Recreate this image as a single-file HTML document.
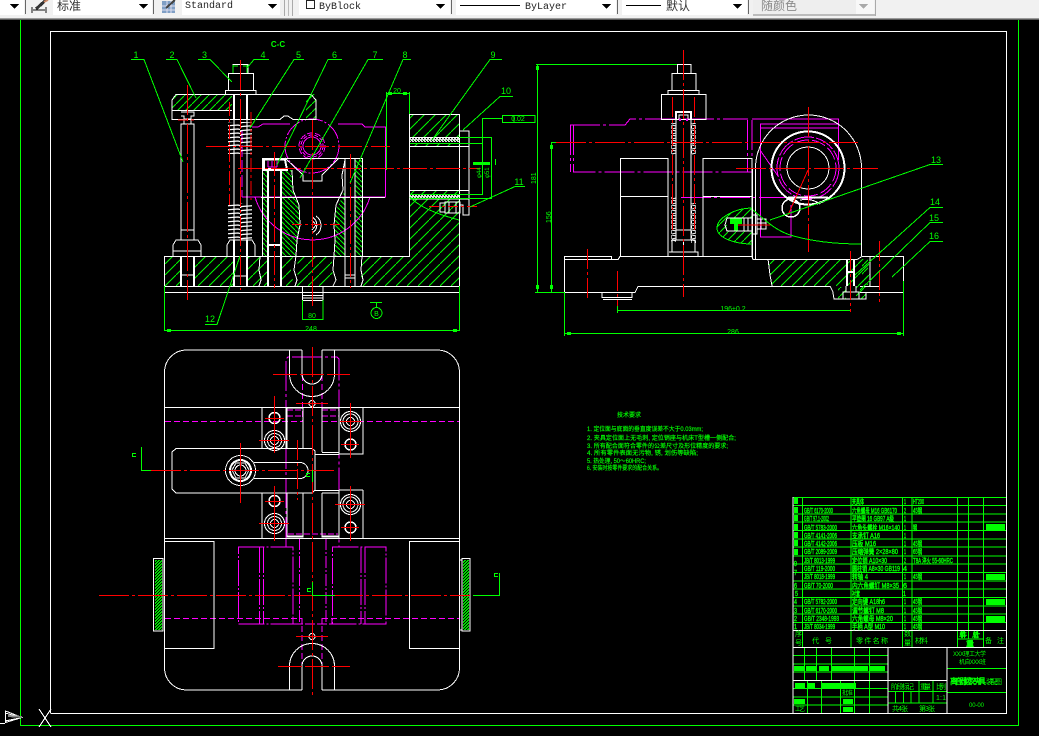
<!DOCTYPE html>
<html><head><meta charset="utf-8"><style>
html,body{margin:0;padding:0;background:#000;width:1039px;height:736px;overflow:hidden}
svg{display:block}
.g{shape-rendering:crispEdges}
text{font-family:"Liberation Sans","Noto Sans CJK SC",sans-serif}
.t{fill:#0f0;font-size:7px;stroke:#0f0;stroke-width:.4}
.l{fill:#0f0;font-size:9px}
.tb{font-family:"Liberation Mono",monospace;font-size:10px;fill:#222}
.cj{font-family:"Noto Sans CJK SC",sans-serif;font-size:12px;fill:#333}
</style></head><body>
<svg width="1039" height="736" viewBox="0 0 1039 736" xmlns="http://www.w3.org/2000/svg">
<defs>
<pattern id="h1" width="11" height="11" patternUnits="userSpaceOnUse"><path d="M0 11L11 0" stroke="#0f0" stroke-width="1" fill="none"/></pattern>
<pattern id="h2" width="5" height="5" patternUnits="userSpaceOnUse"><path d="M0 0L5 5" stroke="#0f0" stroke-width="1" fill="none"/></pattern>
<pattern id="h3" width="8" height="8" patternUnits="userSpaceOnUse"><path d="M0 8L8 0" stroke="#0f0" stroke-width="1" fill="none"/></pattern>
<pattern id="sp" width="24" height="4" patternUnits="userSpaceOnUse"><path d="M0 3L2 2.500L22 1L24 1.500M0 3L1 4" stroke="#fff" stroke-width="1.300" fill="none"/></pattern>
<pattern id="sp2" width="4" height="5" patternUnits="userSpaceOnUse"><path d="M0 0L4 1L4 3L0 4" stroke="#fff" stroke-width="1" fill="none"/></pattern>
<pattern id="kn" width="3" height="3" patternUnits="userSpaceOnUse"><rect width="3" height="3" fill="#0d0"/><rect width="1" height="1" fill="#000"/><rect x="2" y="1" width="1" height="1" fill="#000"/><rect x="1" y="2" width="1" height="1" fill="#000"/></pattern>
<pattern id="ms" width="3" height="3" patternUnits="userSpaceOnUse"><rect width="3" height="3" fill="#ddd"/><rect width="1" height="1" fill="#000"/><rect x="2" y="2" width="1" height="1" fill="#060"/></pattern>
</defs>

<!-- toolbar -->
<rect x="0" y="0" width="1039" height="18" fill="#f1f1f1"/>
<rect x="0" y="18" width="1039" height="1" fill="#9a9a9a"/>
<rect x="0" y="19" width="1039" height="1" fill="#5a5a5a"/>
<g class="g">
<rect x="0" y="0" width="24" height="15" fill="#fff"/>
<rect x="25" y="0" width="1" height="14" fill="#666"/>
<rect x="53" y="0" width="99" height="15" fill="#fff"/>
<rect x="153" y="0" width="1" height="14" fill="#666"/>
<rect x="182" y="0" width="98" height="15" fill="#fff"/>
<rect x="284" y="0" width="1" height="16" fill="#aaa"/>
<rect x="288" y="0" width="1" height="16" fill="#bbb"/>
<rect x="292" y="0" width="1" height="16" fill="#aaa"/>
<rect x="299" y="0" width="151" height="15" fill="#fff"/>
<rect x="451" y="0" width="1" height="14" fill="#666"/>
<rect x="456" y="0" width="160" height="15" fill="#fff"/>
<rect x="617" y="0" width="1" height="14" fill="#666"/>
<rect x="622" y="0" width="125" height="15" fill="#fff"/>
<rect x="748" y="0" width="1" height="14" fill="#666"/>
<rect x="753" y="0" width="121" height="14" fill="#eee"/>
<rect x="753" y="14" width="122" height="2" fill="#bbb"/>
<rect x="875" y="0" width="1" height="16" fill="#aaa"/>
<rect x="856" y="0" width="18" height="14" fill="#f8f8f8"/>
<path d="M10 4h9l-4.500 5zM139 4h9l-4.500 5zM268 4h9l-4.500 5zM436 4h9l-4.500 5zM602 4h9l-4.500 5zM733 4h9l-4.500 5z" fill="#000"/>
<path d="M859 4h9l-4.500 5z" fill="#aaa"/>
<path d="M32 7v6M46 7v6M33 10h12" stroke="#111" fill="none"/>
<path d="M36 9L46 0" stroke="#333" stroke-width="3"/>
<path d="M44 2L48 0" stroke="#c86" stroke-width="2"/>
<rect x="162" y="1" width="13" height="12" fill="#7f9fc5"/>
<path d="M162 6h13M162 10h13M167 1v12M171 1v12" stroke="#dde" fill="none"/>
<path d="M166 8L175 0" stroke="#444" stroke-width="2"/>
<rect x="306.500" y="0.500" width="8" height="8" fill="#fff" stroke="#222"/>
<path d="M460 5.500h60M626 5.500h35" stroke="#000"/>
</g>
<text x="57" y="10" class="cj">标准</text>
<text x="185" y="8" class="tb">Standard</text>
<text x="319" y="9" class="tb">ByBlock</text>
<text x="525" y="9" class="tb">ByLayer</text>
<text x="666" y="10" class="cj">默认</text>
<text x="761" y="10" class="cj" style="fill:#8a8a8a">随颜色</text>

<g class="g" fill="none" stroke-width="1">
<!-- frames -->
<path d="M20.500 20V725.500H1018.500V20" stroke="#0f0"/>
<path d="M50.500 713V31.500H1006.500V713.500H50.500" stroke="#fff"/>

<!-- LEFT VIEW hatching -->
<g stroke="none">
<rect x="172" y="94" width="60" height="17" fill="url(#h3)"/>
<rect x="306" y="94" width="10" height="25" fill="url(#h3)"/>
<rect x="164" y="256" width="17" height="30" fill="url(#h1)"/>
<rect x="194" y="256" width="39" height="30" fill="url(#h1)"/>
<rect x="248" y="256" width="20" height="30" fill="url(#h1)"/>
<path d="M281 256H293L291 270L294 286H281Z" fill="url(#h1)"/>
<path d="M297 256H331L333 270L330 286H296L298 270Z" fill="url(#h1)"/>
<rect x="361" y="256" width="98" height="30" fill="url(#h1)"/>
<rect x="409" y="114" width="50" height="23" fill="url(#h1)"/>
<rect x="409" y="199" width="50" height="57" fill="url(#h1)"/>
<rect x="409" y="190" width="50" height="5" fill="url(#h1)"/>
<rect x="409" y="143" width="50" height="3" fill="url(#h1)"/>
<rect x="409" y="138" width="50" height="4" fill="url(#ms)"/>
<rect x="409" y="195" width="50" height="3" fill="url(#ms)"/>
<rect x="262" y="170" width="5" height="86" fill="url(#h2)"/>
<rect x="355" y="160" width="7" height="96" fill="url(#h2)"/>
<path d="M281 170H292L293 190L299 205L300 225L297 240L296 256H281Z" fill="url(#h2)"/>
<path d="M345 190V256H334L335 235L334 215L342 197Z" fill="url(#h2)"/>
</g>

<!-- left magenta -->
<g stroke="#f0f">
<path d="M252 127H258L263 124H290M338 124H362L365 127H385.500V197H242"/>
<path d="M242 130V197" stroke-dasharray="12 3"/>
<path d="M255 197A60 60 0 0 0 370 197" />
<circle cx="312" cy="146" r="27" stroke-dasharray="18 2 2 2"/>
<circle cx="312" cy="146" r="9"/><circle cx="312" cy="146" r="11" stroke-dasharray="4 2"/><circle cx="312" cy="146" r="13" stroke-dasharray="6 2"/>
<path d="M268 161V167M272 161V167M277 161V167M268 167H277" />
</g>

<!-- left white -->
<g stroke="#fff">
<path d="M233 73V64.500H248V73M228.500 90V73.500H253.500V90M225.500 94V90.500H256V94"/>
<path d="M172 100L176 94.500H311L316 100V119.500H306L293 119.500L288 116H284L280 119.500H172V100ZM172 110.500H232"/>
<path d="M234 94V120M247 94V120M234 240V286M247 240V286" stroke-width="2"/>
<path d="M234 120V240M247 120V240"/>
<path d="M181 112H194V116H191V119H184V116H181M181 124V230H194V124ZM184 119V124H191V119"/>
<path d="M181 230H194V240H181ZM173 256V245L176 240H198L201 245V256M173 251H201M181 275H194"/>
<path d="M181 256V286M194 256V286" stroke-width="2"/>
<path d="M227 256V245L230 240H252L255 245V256M233 276H248"/>
<path d="M262.500 256V158.500H362.500V256"/>
<path d="M264 159.500H285L287 170H264ZM264 169H285" stroke-width="2"/>
<path d="M268 170V286M281 170V286M268 245H281" stroke-width="2"/>
<path d="M285 158L303 175V181H322V175L339 158"/>
<path d="M292 170L293 190L299 205L300 225L297 240L296 256L294 270L297 280L295 286"/>
<path d="M345 160L342 175L343 190L336 205L334 225L335 240L334 256L333 270L336 280L333 286"/>
<path d="M260 256L259 270L261 280L259 286M362 256L361 270L363 280L361 286"/>
<path d="M345 158V286M355 158V286M345 275H355M345 278H355"/>
<path d="M261 197.500H385"/>
<path d="M164.500 286V256.500H409.500V93.500M409.500 114.500H459.500V286M164.500 286.500H459.500M164.500 292.500H459.500M164.500 286V292M459.500 286V292"/>
<path d="M409 137.500H459M409 146.500H469V131H459M409 190.500H469V200M409 199H459M469 146V190"/>
<path d="M469 131V146M440 203H445V212H440ZM445 202H460V213H445ZM449 202V213M456 202V213M459 199H469V215H463V205H460" />
<path d="M302.500 287V300.500H323V287M302 295.500H323M302 298H323"/>
<path d="M316 216A10 11 0 0 1 316 235M312 217A9 9 0 0 1 312 233M312 220L316 225L312 230"/>
</g>
<g stroke="none">
<rect x="228" y="122" width="24" height="32" fill="url(#sp)"/>
<rect x="228" y="203" width="24" height="37" fill="url(#sp)"/>
</g>

<!-- left red -->
<g stroke="#f00">
<path d="M206 146.500H390" stroke-dasharray="24 3 3 3"/>
<path d="M238 168.500H480" stroke-dasharray="24 3 3 3"/>
<path d="M312.500 120V306" stroke-dasharray="30 3 3 3"/>
<path d="M187.500 85V300" stroke-dasharray="30 3 3 3"/>
<path d="M240.500 60V290" stroke-dasharray="30 3 3 3"/>
<path d="M274.500 152V288" stroke-dasharray="24 3 3 3"/>
<path d="M350.500 154V288" stroke-dasharray="24 3 3 3"/>
<path d="M229.500 102V205" stroke-dasharray="14 3 3 3"/>
<path d="M251 112V200" stroke-dasharray="14 3 3 3"/>
<path d="M178 120H195M292 224.500H340" stroke-dasharray="10 3 3 3"/>
<path d="M429 206.500H478"  stroke-dasharray="10 3 3 3"/>
</g>

<!-- left green -->
<g stroke="#0f0">
<path d="M131 59.500H144L183 162M166 59.500H177L196 98M198 59.500H210L232 82M269 59.500H254L247 68M304 59.500H294L250 128M342 59.500H328L277 165M383 59.500H368L300 178M411 59.500H403L350 183M502 59.500H490L432 140M513 96.500H500L463 130M525 186.500H515L470 207M205 324.500H217L240 256"/>
<path d="M386.500 170V92M409.500 92V114M386 93.500H409"/>
<path d="M482.500 194V118.500H502M502.500 115.500H535V122.500H502.500ZM514 115V122M491.500 137V198M459 137.500H492M410 198.500H492M410 143.500H483M410 194.500H483M495.500 159V165"/>
<path d="M164.500 286V331M459.500 286V331M164 330.500H459M302.500 300V320M323 300V320M302 319.500H323"/>
<path d="M370 302.500H382M376.500 302V307"/>
<circle cx="376.500" cy="313" r="5.500"/>
<path d="M410 197C420 208 440 215 459 220"/>
<rect x="473" y="162" width="17" height="3" fill="#0f0" stroke="none"/>
<path d="M233 65V73M247 65V73M233 66H238M243 66H247" stroke-width="1"/>
</g>
</g>
<text x="278" y="47" class="l" text-anchor="middle" style="font-size:8px;font-weight:bold">C-C</text>
<g class="l" text-anchor="middle">
<text x="136" y="58">1</text><text x="172" y="58">2</text><text x="204.500" y="58">3</text><text x="263" y="58">4</text><text x="298.500" y="58">5</text><text x="334.500" y="58">6</text><text x="375" y="58">7</text><text x="405" y="58">8</text><text x="493" y="58">9</text><text x="506" y="94">10</text><text x="519" y="185">11</text><text x="210" y="322">12</text>
<text x="936" y="163">13</text><text x="935" y="205">14</text><text x="934" y="221">15</text><text x="934" y="239">16</text>
<text x="311" y="331" style="font-size:7px">248</text><text x="733" y="334" style="font-size:7px">286</text><text x="733" y="311" style="font-size:7px">196±0.2</text><text x="397" y="93" style="font-size:7px">20</text><text x="312" y="318" style="font-size:7px">80</text>
<text x="376.500" y="316" style="font-size:7px">B</text><text x="518" y="121" style="font-size:7px">0.02</text>
</g>
<text transform="translate(481,178) rotate(-90)" class="l" style="font-size:6px">φ44</text>
<text transform="translate(489,178) rotate(-90)" class="l" style="font-size:6px">φ51</text>
<text transform="translate(536,184) rotate(-90)" class="l" style="font-size:7px">181</text>
<text transform="translate(551,223) rotate(-90)" class="l" style="font-size:7px">156</text>

<!-- RIGHT VIEW -->
<g class="g" fill="none" stroke-width="1">
<g stroke="none">
<path d="M768 259H869L870 286H772L770 275Z" fill="url(#h1)"/>
<path d="M862 259H868V285H862Z" fill="url(#h3)"/>
<path d="M856 286H866V299H856ZM838 287H846V299H838Z" fill="url(#h3)"/>
<path d="M752 208C735 208 717 218 717 228C717 238 735 244 752 244Z" fill="url(#h3)"/>
<rect x="727" y="218" width="25" height="13" fill="#000"/>
<path d="M730 218H742V224H738V231H734V224H730Z" fill="#0f0"/>
</g>
<g stroke="#f0f">
<path d="M570.500 125V172M573.500 125V172H752" stroke-dasharray="30 3 3 3"/>
<path d="M570 125H625L630 119H748M747.500 120V172M752 120V172" stroke-dasharray="30 3 3 3"/>
<path d="M752 119H838.500V160"/>
<path d="M760.500 124V237H791V205M760 124H838M760 128H838"/>
<path d="M681 197.500H830" stroke-dasharray="30 3 3 3"/>
<circle cx="808" cy="168" r="31" stroke-dasharray="20 2"/>
<circle cx="808" cy="168" r="28" stroke-dasharray="14 3"/>
<path d="M760 150L778 176"/>
</g>
<g stroke="#fff">
<path d="M677.500 73V64.500H691V73M672 90V73.500H696V90M668 94V90.500H699V94M661.500 94.500H706V119.500H661.500Z"/>
<path d="M676 120V240M691 120V240" stroke-width="1"/>
<path d="M676 120V112H691V120" stroke-width="2"/>
<path d="M679 119V115H688V119"/>
<path d="M683.500 64V73"/>
<path d="M676 230H691V240M672 240H695V252H672ZM669 252H698V256M683.500 240V252"/>
<path d="M620.500 256V158.500H668V256M620 196.500H668M703 256V158.500H752V256M703 196.500H752"/>
<path d="M564.500 292V259.500H611.500M564.500 256.500H611.500V259M564.500 256V260M611 259.500H618L620 256.500H752L753 259.500H758"/>
<path d="M564.500 292.500H635L638 286.500H830M602 292V297.500H632V292M603 299.500H632"/>
<path d="M752.500 168V259M755.500 168V259.500H857L862 256.500H903.500V292.500H860M860 286.500H880M861.500 168V256M870 256V286"/>
<path d="M755.500 168A53 53 0 0 1 861.500 168"/>
<circle cx="808" cy="168" r="36.500" stroke-width="2"/>
<circle cx="808" cy="168" r="21"/>
<circle cx="791" cy="208" r="9" stroke-width="1.500"/>
<path d="M788 197.500H828" stroke-width="2"/>
<path d="M800 200Q812 198 820 204"/>
<path d="M727 218H752V231H727L725 225ZM752 215H757V234H752ZM757 219H766V229H757ZM761 219V229M757 223H766M744 218V231M748 218V231" stroke-width="1"/>
<path d="M847 259V286M854 259V286M847 272H854" stroke-width="2"/>
<path d="M843 292H859V299H843ZM846 286V292M856 286V292" stroke-width="1"/>
<path d="M830 286L833 292V293L834 299H866V292"/>
<path d="M768 259L770 275L772 286"/>
</g>
<g stroke="none">
<rect x="671" y="123" width="5" height="32" fill="url(#sp2)"/>
<rect x="691" y="123" width="5" height="32" fill="url(#sp2)"/>
<rect x="671" y="197" width="5" height="45" fill="url(#sp2)"/>
<rect x="691" y="203" width="5" height="40" fill="url(#sp2)"/>
<rect x="679" y="119" width="2" height="2" fill="#f0f"/><rect x="686" y="119" width="2" height="2" fill="#f0f"/>
</g>
<g stroke="#f00">
<path d="M556 142.500H858" stroke-dasharray="30 3 3 3"/>
<path d="M736 168.500H878" stroke-dasharray="30 3 3 3"/>
<path d="M808.500 107V252" stroke-dasharray="30 3 3 3"/>
<path d="M683.500 50V297" stroke-dasharray="30 3 3 3"/>
<path d="M672.500 97V230M694.500 97V230" stroke-dasharray="20 3 3 3"/>
<path d="M587.500 249V299" stroke-dasharray="20 3 3 3"/>
<path d="M617.500 271V307" stroke-dasharray="20 3 3 3"/>
<path d="M850.500 251V312" stroke-dasharray="20 3 3 3"/>
<path d="M879.500 241V302" stroke-dasharray="20 3 3 3"/>
<path d="M808 170L788 215M738 225H770"/>
</g>
<g stroke="#0f0">
<path d="M536 64.500H677M537.500 65V292M535 292.500H565M551.500 143V292M551 142.500H556"/>
<path d="M943 164.500H930L770 220M943 207.500H930L855 275M943 222.500H930L860 290M943 241.500H930L892 277"/>
<path d="M617.500 306V313M617 310.500H850M564.500 292V336M564 333.500H903M903.500 281V336"/>
<path d="M753 210C765 220 775 230 790 235C810 241 835 244 861 244"/>
<path d="M752 208C735 208 717 218 717 228C717 238 735 244 752 244"/>
</g>
<g fill="#0f0" stroke="none">
<rect x="536" y="66" width="3" height="4"/><rect x="536" y="285" width="3" height="4"/>
<rect x="550" y="145" width="3" height="4"/><rect x="550" y="285" width="3" height="4"/>
<rect x="567" y="332" width="4" height="3"/><rect x="897" y="332" width="4" height="3"/>
<rect x="167" y="329" width="4" height="3"/><rect x="453" y="329" width="4" height="3"/>
<rect x="388" y="92" width="4" height="3"/><rect x="403" y="92" width="4" height="3"/>
</g>

<!-- PLAN VIEW -->
<g stroke="#f0f">
<path d="M286 547V359L288 357H337L339 359V547" stroke-dasharray="30 3 3 3"/>
<path d="M302.500 375V422M322 375V422M302 626V670M322 626V670" stroke-dasharray="6 3"/>
<path d="M165 421.500H302M322 421.500H459" stroke-dasharray="6 3"/>
<path d="M165 618.500H302M322 618.500H459" stroke-dasharray="6 3"/>
<path d="M287 410H302M322 410H339M287 416H302M322 416H339" stroke-dasharray="6 2"/>
<path d="M288 534H338" stroke-dasharray="6 2"/>
<path d="M262 538.500H363"/>
<path d="M238.500 547H293V624H238.500ZM259.500 547V624M263.500 547V624" stroke-dasharray="26 2 2 2"/>
<path d="M332.500 547H386V624H332.500ZM361 547V624M365 547V624" stroke-dasharray="26 2 2 2"/>
<path d="M299.500 538V624M326 538V624" stroke-dasharray="12 2 2 2"/>
<path d="M293 624H332M293 618V624M302 618V624M322 618V624M332 618V624" stroke-dasharray="10 2"/>
</g>
<g stroke="#fff">
<path d="M302 350H186A22 22 0 0 0 164.500 372V668A22 22 0 0 0 186 690H302"/>
<path d="M322 350H438A22 22 0 0 1 459.500 372V668A22 22 0 0 1 438 690H322"/>
<path d="M289.500 350V374A22.500 22.500 0 0 0 334.500 374V350M302 350V374A10 10 0 0 0 322 374V350"/>
<path d="M302 690V666A10 10 0 0 1 322 666V690M289.500 690V666A22.500 22.500 0 0 1 334.500 666V690"/>
<path d="M164 407.500H459M164 538.500H459M164 541.500H214M409 541.500H459"/>
<path d="M214 541V648.500H164M409.500 541V648.500H459"/>
<path d="M262 407V448M286 407V448M262 493V538M339 407V454H363V407M339 490V538M363 490H339M363 490V538M262 493V538"/>
<path d="M287 408H303V448M322 408H339V452M322 408V452M322 452.500H339M287 408V448"/>
<path d="M287 493V537H303V493M322 493V537H339M322 493H339M287 536H303M322 536H339"/>
<path d="M176 448.500H312L315 451V490L312 493H176L172 489V452ZM315 454.500H339M315 490.500H339"/>
<path d="M254 462.500H300A8 8 0 0 1 300 478.500H254"/>
<circle cx="240.500" cy="470.500" r="15"/><circle cx="240.500" cy="470.500" r="11"/><circle cx="240.500" cy="470.500" r="10"/>
<path d="M236 463H245L249 470L245 478H236L232 470Z"/><circle cx="240.500" cy="470.500" r="5.500"/>
<circle cx="274.500" cy="418" r="5.500" stroke-width="1.500"/><circle cx="274.500" cy="501" r="5.500" stroke-width="1.500"/>
<circle cx="350.500" cy="444.500" r="5.500" stroke-width="1.500"/><circle cx="350.500" cy="527.500" r="5.500" stroke-width="1.500"/>
<circle cx="274.500" cy="440.500" r="10"/><circle cx="274.500" cy="440.500" r="7"/><circle cx="274.500" cy="440.500" r="4"/>
<circle cx="274.500" cy="523.500" r="10"/><circle cx="274.500" cy="523.500" r="7"/><circle cx="274.500" cy="523.500" r="4"/>
<circle cx="350.500" cy="421.500" r="10"/><circle cx="350.500" cy="421.500" r="7.500"/><circle cx="350.500" cy="421.500" r="4"/>
<circle cx="350.500" cy="504.500" r="10"/><circle cx="350.500" cy="504.500" r="7.500"/><circle cx="350.500" cy="504.500" r="4"/>
<circle cx="312" cy="403.500" r="3"/><circle cx="312" cy="636.500" r="3"/>
<path d="M153.500 558.500H163V631H153.500ZM462 558.500H470V631H462ZM459 560H462M459 630H462"/>
</g>
<g stroke="none">
<rect x="155" y="560" width="7" height="70" fill="url(#kn)"/>
<rect x="463" y="560" width="6" height="70" fill="url(#kn)"/>
</g>
<g stroke="#f00">
<path d="M312.500 347V696" stroke-dasharray="30 3 3 3"/>
<path d="M99 595.500H470" stroke-dasharray="30 3 3 3"/>
<path d="M151 470.500H334" stroke-dasharray="30 3 3 3"/>
<path d="M273 374.500H350M278 666.500H350" stroke-dasharray="24 3"/>
<path d="M296 403.500H328M296 636.500H328"/>
<path d="M274.500 396V453M274.500 486V541M350.500 403V458M350.500 486V541M240.500 443V503"/>
<path d="M265 418.500H284M259 440.500H289M265 501.500H284M259 523.500H289M340 421.500H361M341 444.500H359M335 504.500H365M341 527.500H359"/>
<path d="M297.500 440V500" stroke-dasharray="20 3 3 3"/>
</g>
<g stroke="#0f0">
<path d="M141.500 447V470.500H151M312.500 470V482M312.500 582V595.500H335M499.500 573V595.500H473"/>
</g>
<g fill="#0f0" stroke="none">
<path d="M132 453h4v1h-3v2h3v1h-4ZM306 473h4v1h-3v2h3v1h-4ZM307 588h4v1h-3v2h3v1h-4ZM494 573h4v1h-3v2h3v1h-4Z"/>
</g>

<!-- UCS -->
<g stroke="#fff">
<path d="M0 723.500H5M5.500 711V722.500L22 717.500ZM5 713L20 717M5 721L20 718"/>
<path d="M39 709L51 727M51 709L39 727"/>
<path d="M8 716L22 717" stroke="#888" stroke-width="2"/>
</g>

<!-- TITLE BLOCK -->
<g stroke="#0f0">
<path d="M793 497.500H1006M793 505.500H1006M793 514H1006M793 522H1006M793 530.500H1006M793 539H1006M793 547H1006M793 556H1006M793 564H1006M793 572.500H1006M793 581H1006M793 589H1006M793 597.500H1006M793 606H1006M793 614H1006M793 622.500H1006"/>
<path d="M802.500 497V647M851 497V647M902.500 497V647M912 497V647M957.500 497V647M968.500 497V639M983.500 497V647M957 639H983"/>
<path d="M793 655.500H888M793 664H888M793 672H888M793 688.500H888M793 697H888M793 705H888"/>
<path d="M804.500 647V680M816.500 647V680M831.500 647V680M854.500 647V713M869.500 647V713"/>
<path d="M807.500 681V713M821.500 681V713M840.500 681V713"/>
<path d="M888 691.500H947M888 703H947M947 692.500H1006M919 681V703M933 681V703M895.500 691V703M903.500 691V703M911 691V703"/>
<path d="M947 668.500H1006"/>
</g>
<g stroke="#fff">
<path d="M793 497V713M793 630.500H1006M793 647.500H1006M793 680.500H947M888 647V713M947 647V713"/>
</g>
<g fill="#0f0" stroke="none">
<rect x="794" y="666" width="11" height="5"/><rect x="806" y="666" width="10" height="5"/><rect x="819" y="666" width="10" height="5"/><rect x="832" y="666" width="36" height="5"/><rect x="870" y="666" width="15" height="5"/>
<rect x="795" y="683" width="10" height="5"/><rect x="808" y="683" width="7" height="5"/><rect x="822" y="683" width="34" height="5"/>
<rect x="794" y="699" width="11" height="5"/><rect x="843" y="699" width="10" height="5"/><rect x="843" y="707" width="10" height="5"/>
<rect x="794" y="498" width="4" height="6"/><rect x="794" y="507" width="4" height="6"/><rect x="794" y="515" width="4" height="6"/><rect x="794" y="524" width="4" height="6"/><rect x="794" y="532" width="4" height="6"/><rect x="794" y="540" width="4" height="6"/><rect x="794" y="549" width="4" height="6"/>
<rect x="986" y="524" width="19" height="6"/><rect x="986" y="574" width="19" height="6"/><rect x="986" y="599" width="19" height="6"/><rect x="986" y="616" width="19" height="6"/>
</g>
</g>

<g class="t">
<text x="794" y="566" textLength="3" lengthAdjust="spacingAndGlyphs">9</text><text x="794" y="575" textLength="3" lengthAdjust="spacingAndGlyphs">7</text><text x="794" y="588" textLength="3" lengthAdjust="spacingAndGlyphs">6</text><text x="795" y="596" textLength="3" lengthAdjust="spacingAndGlyphs">5</text><text x="794" y="604" textLength="3" lengthAdjust="spacingAndGlyphs">4</text><text x="794" y="613" textLength="3" lengthAdjust="spacingAndGlyphs">3</text><text x="794" y="621" textLength="3" lengthAdjust="spacingAndGlyphs">2</text><text x="794" y="629" textLength="3" lengthAdjust="spacingAndGlyphs">1</text>

<text x="804" y="513" textLength="29" lengthAdjust="spacingAndGlyphs">GB/T 6170-2000</text>
<text x="804" y="521" textLength="25" lengthAdjust="spacingAndGlyphs">GB/T 97.1-2002</text>
<text x="804" y="530" textLength="33" lengthAdjust="spacingAndGlyphs">GB/T 5783-2000</text>
<text x="804" y="538" textLength="33" lengthAdjust="spacingAndGlyphs">GB/T 4141-2006</text>
<text x="804" y="546" textLength="33" lengthAdjust="spacingAndGlyphs">GB/T 4142-2006</text>
<text x="804" y="554" textLength="33" lengthAdjust="spacingAndGlyphs">GB/T 2089-2009</text>
<text x="804" y="563" textLength="31" lengthAdjust="spacingAndGlyphs">JB/T 8013-1999</text>
<text x="804" y="571" textLength="31" lengthAdjust="spacingAndGlyphs">GB/T 119-2000</text>
<text x="804" y="579" textLength="31" lengthAdjust="spacingAndGlyphs">JB/T 8018-1999</text>
<text x="804" y="588" textLength="29" lengthAdjust="spacingAndGlyphs">GB/T 70-2000</text>
<text x="804" y="604" textLength="33" lengthAdjust="spacingAndGlyphs">GB/T 5782-2000</text>
<text x="804" y="613" textLength="33" lengthAdjust="spacingAndGlyphs">GB/T 6170-2000</text>
<text x="804" y="621" textLength="35" lengthAdjust="spacingAndGlyphs">GB/T 2348-1993</text>
<text x="804" y="629" textLength="31" lengthAdjust="spacingAndGlyphs">JB/T 8034-1999</text>

<text x="852" y="504" textLength="12" lengthAdjust="spacingAndGlyphs">夹具体</text>
<text x="852" y="513" textLength="45" lengthAdjust="spacingAndGlyphs">六角螺母 M16 GB6170</text>
<text x="852" y="521" textLength="42" lengthAdjust="spacingAndGlyphs">平垫圈 16 GB97 A级</text>
<text x="852" y="530" textLength="48" lengthAdjust="spacingAndGlyphs">六角头螺栓 M16×140</text>
<text x="852" y="538" textLength="28" lengthAdjust="spacingAndGlyphs">支承钉 A16</text>
<text x="852" y="546" textLength="24" lengthAdjust="spacingAndGlyphs">压板 M16</text>
<text x="852" y="554" textLength="46" lengthAdjust="spacingAndGlyphs">压缩弹簧 2×28×80</text>
<text x="852" y="563" textLength="35" lengthAdjust="spacingAndGlyphs">定位销 A10×30</text>
<text x="852" y="571" textLength="48" lengthAdjust="spacingAndGlyphs">圆柱销 A8×30 GB119</text>
<text x="852" y="579" textLength="16" lengthAdjust="spacingAndGlyphs">转轴 4</text>
<text x="852" y="588" textLength="47" lengthAdjust="spacingAndGlyphs">内六角螺钉 M8×35</text>
<text x="852" y="596" textLength="8" lengthAdjust="spacingAndGlyphs">衬套</text>
<text x="852" y="604" textLength="33" lengthAdjust="spacingAndGlyphs">定向键 A18h6</text>
<text x="852" y="613" textLength="32" lengthAdjust="spacingAndGlyphs">调节螺钉 M8</text>
<text x="852" y="621" textLength="41" lengthAdjust="spacingAndGlyphs">六角螺母 M8×20</text>
<text x="852" y="629" textLength="33" lengthAdjust="spacingAndGlyphs">手柄 A型 M10</text>

<text x="904" y="504" textLength="2" lengthAdjust="spacingAndGlyphs">1</text><text x="904" y="513" textLength="2" lengthAdjust="spacingAndGlyphs">2</text><text x="904" y="521" textLength="2" lengthAdjust="spacingAndGlyphs">1</text><text x="904" y="530" textLength="2" lengthAdjust="spacingAndGlyphs">1</text><text x="904" y="538" textLength="2" lengthAdjust="spacingAndGlyphs">1</text><text x="904" y="546" textLength="2" lengthAdjust="spacingAndGlyphs">1</text><text x="904" y="554" textLength="2" lengthAdjust="spacingAndGlyphs">1</text><text x="904" y="563" textLength="2" lengthAdjust="spacingAndGlyphs">2</text><text x="903" y="571" textLength="4" lengthAdjust="spacingAndGlyphs">4</text><text x="904" y="579" textLength="2" lengthAdjust="spacingAndGlyphs">1</text><text x="903" y="588" textLength="4" lengthAdjust="spacingAndGlyphs">6</text><text x="903" y="596" textLength="3" lengthAdjust="spacingAndGlyphs">1</text><text x="904" y="604" textLength="2" lengthAdjust="spacingAndGlyphs">1</text><text x="904" y="613" textLength="2" lengthAdjust="spacingAndGlyphs">1</text><text x="904" y="621" textLength="2" lengthAdjust="spacingAndGlyphs">1</text><text x="904" y="629" textLength="2" lengthAdjust="spacingAndGlyphs">1</text>

<text x="913" y="504" textLength="11" lengthAdjust="spacingAndGlyphs">HT200</text>
<text x="913" y="513" textLength="9" lengthAdjust="spacingAndGlyphs">45钢</text>
<text x="913" y="530" textLength="4" lengthAdjust="spacingAndGlyphs">钢</text>
<text x="913" y="546" textLength="9" lengthAdjust="spacingAndGlyphs">45钢</text>
<text x="913" y="554" textLength="9" lengthAdjust="spacingAndGlyphs">65钢</text>
<text x="913" y="563" textLength="40" lengthAdjust="spacingAndGlyphs">T8A 淬火 55-60HRC</text>
<text x="913" y="579" textLength="9" lengthAdjust="spacingAndGlyphs">45钢</text>
<text x="913" y="604" textLength="9" lengthAdjust="spacingAndGlyphs">45钢</text>
<text x="913" y="613" textLength="9" lengthAdjust="spacingAndGlyphs">45钢</text>
<text x="913" y="621" textLength="9" lengthAdjust="spacingAndGlyphs">45钢</text>
<text x="913" y="629" textLength="9" lengthAdjust="spacingAndGlyphs">45钢</text>

<g style="stroke-width:0">
<text x="795" y="636">序</text><text x="795" y="645">号</text>
<text x="812" y="643" textLength="20">代    号</text>
<text x="856" y="643" textLength="32">零 件 名 称</text>
<text x="904" y="636">数</text><text x="904" y="645">量</text>
<text x="915" y="643" textLength="13">材料</text>
<text x="985" y="643" textLength="19">备   注</text>
<text x="953" y="656" style="font-size:6px" textLength="33">XXX理工大学</text>
<text x="959" y="664" style="font-size:6px" textLength="27">机自XXX班</text>
<text x="969" y="707" style="font-size:6px" textLength="15">00-00</text>
<text x="891" y="689" textLength="23">阶段标记</text>
<text x="920" y="689" textLength="11">重量</text>
<text x="936" y="689" textLength="10">比例</text>
<text x="936" y="700" textLength="10">1 : 1</text>
<text x="892" y="711" textLength="16">共4张</text>
<text x="919" y="711" textLength="16">第3张</text>
</g>
<text x="959" y="637" textLength="8">单件</text><text x="972" y="637" textLength="8">总计</text><text x="966" y="646" textLength="8">重量</text>
<text x="950" y="684" textLength="36" style="font-size:8px">离合器拨叉夹具</text>
<text x="986" y="684" textLength="16" style="font-size:7px;stroke-width:0">装配图</text>
<text x="842" y="695" style="font-size:6px;stroke-width:0" textLength="11">批准</text>
<text x="795" y="711" style="font-size:6px;stroke-width:0" textLength="10">工艺</text>
</g>

<!-- tech notes -->
<g class="t" style="font-size:6px;stroke-width:.15">
<text x="617" y="417" textLength="24" lengthAdjust="spacingAndGlyphs">技术要求</text>
<text x="587" y="431" textLength="116" lengthAdjust="spacingAndGlyphs">1. 定位面与底面的垂直度误差不大于0.03mm;</text>
<text x="587" y="440" textLength="149" lengthAdjust="spacingAndGlyphs">2. 夹具定位面上无毛刺, 定位销座与机床T型槽一侧配合;</text>
<text x="587" y="448" textLength="141" lengthAdjust="spacingAndGlyphs">3. 所有配合面符合零件的公差尺寸及形位精度的要求;</text>
<text x="587" y="455" textLength="111" lengthAdjust="spacingAndGlyphs">4. 所有零件表面无污物, 锈, 划伤等缺陷;</text>
<text x="587" y="463" textLength="59" lengthAdjust="spacingAndGlyphs">5. 热处理, 50～60HRC;</text>
<text x="587" y="470" textLength="75" lengthAdjust="spacingAndGlyphs">6. 安装时按零件要求的配合关系。</text>
</g>
</svg>
</body></html>
